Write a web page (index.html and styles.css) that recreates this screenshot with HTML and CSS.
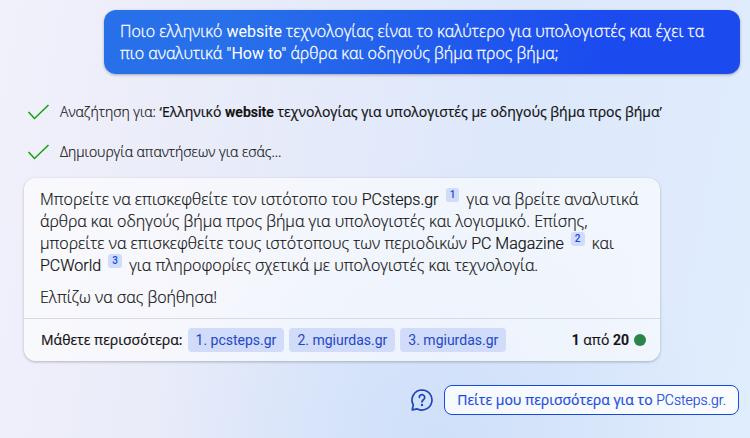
FILE: index.html
```html
<!DOCTYPE html>
<html lang="el">
<head>
<meta charset="utf-8">
<meta name="viewport" content="width=device-width, initial-scale=1">
<title>Συνομιλία</title>
<link rel="stylesheet" href="styles.css">
</head>
<body>
<main class="chat">
  <div class="question">Ποιο ελληνικό <span class="latin">website</span> τεχνολογίας είναι το καλύτερο για υπολογιστές και έχει τα πιο αναλυτικά <span class="latin">"How to"</span> άρθρα και οδηγούς βήμα προς βήμα;</div>

  <ul class="steps">
    <li class="step">
      <svg class="check" viewBox="0 0 22 16" aria-hidden="true"><path d="M1 8l6 6.500L21 1"/></svg>
      <span>Αναζήτηση για: <strong>‘Ελληνικό <span class="latin bold">website</span> τεχνολογίας για υπολογιστές με οδηγούς βήμα προς βήμα’</strong></span>
    </li>
    <li class="step">
      <svg class="check" viewBox="0 0 22 16" aria-hidden="true"><path d="M1 8l6 6.500L21 1"/></svg>
      <span>Δημιουργία απαντήσεων για εσάς...</span>
    </li>
  </ul>

  <article class="answer">
    <div class="answer-text">
      <p>Μπορείτε να επισκεφθείτε τον ιστότοπο του <span class="latin light">PCsteps.gr</span> <a class="cite" href="#source-1">1</a> για να βρείτε αναλυτικά άρθρα και οδηγούς βήμα προς βήμα για υπολογιστές και λογισμικό. Επίσης, μπορείτε να επισκεφθείτε τους ιστότοπους των περιοδικών <span class="latin light">PC Magazine</span> <a class="cite" href="#source-2">2</a> και <span class="latin light">PCWorld</span> <a class="cite" href="#source-3">3</a> για πληροφορίες σχετικά με υπολογιστές και τεχνολογία.</p>
      <p>Ελπίζω να σας βοήθησα!</p>
    </div>
    <footer class="sources">
      <span class="sources-label">Μάθετε περισσότερα:</span>
      <a class="source" id="source-1" href="#source-1">1. pcsteps.gr</a>
      <a class="source" id="source-2" href="#source-2">2. mgiurdas.gr</a>
      <a class="source" id="source-3" href="#source-3">3. mgiurdas.gr</a>
      <span class="counter"><span class="latin bold">1</span> από <span class="latin bold">20</span></span>
      <span class="dot"></span>
    </footer>
  </article>

  <div class="suggestions">
    <svg class="help" viewBox="0 0 24 24" aria-hidden="true"><path d="M12 2a10 10 0 1 1-4.600 18.900L2.200 21.900l1.100-5A10 10 0 0 1 12 2z"/><path d="M9.300 9.400a2.700 2.700 0 1 1 4.300 2.100c-1 .8-1.600 1.300-1.600 2.500"/><circle cx="12" cy="17" r="1.200"/></svg>
    <button class="suggestion" type="button">Πείτε μου περισσότερα για το <span class="latin light">PCsteps.gr.</span></button>
  </div>
</main>
</body>
</html>
```
FILE: styles.css
```css
* {
  box-sizing: border-box;
}

body {
  margin: 0;
  min-height: 100vh;
  font: 16px/22px "Open Sans", "Noto Sans", sans-serif;
  color: #111;
  background:
    radial-gradient(circle at 58% 100%, #cfe0f9 0, rgba(207, 224, 249, 0) 45%),
    linear-gradient(100deg, #f1f1fb 0%, #eaecf9 25%, #dde8fb 65%, #e0edfd 100%);
}

.latin {
  font-family: Roboto, sans-serif;
  font-weight: 400;
  line-height: 1;
}

.light {
  font-weight: 300;
}

.bold {
  font-weight: 600;
}

.chat {
  display: flex;
  flex-direction: column;
  padding: 10px 10px 0 24px;
}

.question {
  margin-left: 80px;
  padding: 10px 16px;
  border-radius: 12px;
  font-weight: 300;
  -webkit-text-stroke: 0.3px currentColor;
  color: #fff;
  background: linear-gradient(100deg, #2870ea 20%, #1b4aef 80%);
  box-shadow: 0 1px 3px rgba(0, 0, 0, 0.3);
}

.question .latin {
  -webkit-text-stroke: 0;
}

.steps {
  display: flex;
  flex-direction: column;
  gap: 20px;
  margin: 28px 0 16px;
  padding: 0;
  list-style: none;
  font-size: 14px;
  line-height: 20px;
  font-weight: 300;
  -webkit-text-stroke: 0.2px currentColor;
}

.step {
  display: flex;
  align-items: center;
  gap: 10px;
  padding-left: 3px;
}

.step strong {
  font-weight: 400;
}

.check {
  flex: none;
  width: 23px;
  height: 16px;
  fill: none;
  stroke: #13a10e;
  stroke-width: 1.5;
}

.answer {
  margin-right: 80px;
  border-radius: 12px;
  background: rgba(255, 255, 255, 0.6);
  box-shadow: 0 1px 3px rgba(0, 0, 0, 0.25);
}

.answer-text {
  padding: 10px 16px;
  font-weight: 300;
  -webkit-text-stroke: 0.2px currentColor;
}

.answer-text p {
  margin: 0;
}

.answer-text p + p {
  margin-top: 10px;
}

.cite {
  display: inline-block;
  margin: 0 3px;
  padding: 0 4px;
  border-radius: 3px;
  font: 500 10px/14px Roboto, sans-serif;
  -webkit-text-stroke: 0;
  vertical-align: top;
  color: #174ae4;
  background: #d1dbfa;
  text-decoration: none;
}

.sources {
  display: flex;
  align-items: center;
  gap: 5px;
  padding: 9px 14px 9px 17px;
  border-top: 1px solid #d5dae3;
  font-size: 14px;
  line-height: 24px;
}

.sources-label,
.counter {
  font-weight: 400;
  -webkit-text-stroke: 0.2px currentColor;
  white-space: nowrap;
}

.source {
  padding: 0 8px;
  border-radius: 4px;
  font-family: Roboto, sans-serif;
  color: #2448c4;
  background: #d1dbfa;
  text-decoration: none;
  white-space: nowrap;
}

.counter {
  margin-left: auto;
}

.dot {
  width: 12px;
  height: 12px;
  border-radius: 50%;
  background: #2b8548;
}

.suggestions {
  display: flex;
  justify-content: flex-end;
  align-items: center;
  gap: 10px;
  margin: 24px 1px 0 0;
}

.help {
  width: 24px;
  height: 24px;
  fill: none;
  stroke: #1f45b5;
  stroke-width: 1.7;
  stroke-linecap: round;
  stroke-linejoin: round;
}

.help circle {
  fill: #1f45b5;
  stroke: none;
}

.suggestion {
  padding: 4px 12px;
  border: 1px solid #174ae4;
  border-radius: 8px;
  font: 400 14px/20px "Open Sans", "Noto Sans", sans-serif;
  -webkit-text-stroke: 0.2px currentColor;
  color: #174ae4;
  background: rgba(255, 255, 255, 0.8);
}
```
